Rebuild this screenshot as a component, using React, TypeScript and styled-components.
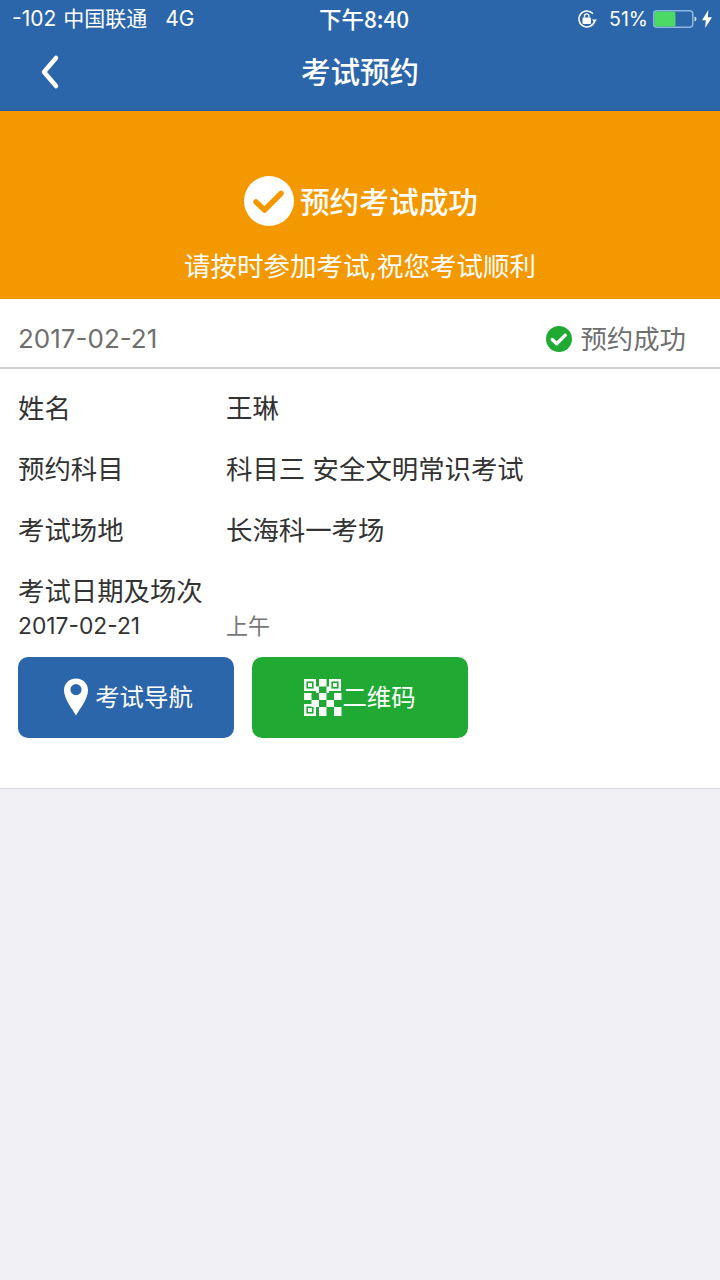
import React from "react";
import styled, { createGlobalStyle } from "styled-components";

const Global = createGlobalStyle`
  html, body {
    margin: 0;
    padding: 0;
    background: #efeff4;
    font-family: Inter, "Noto Sans CJK SC", sans-serif;
  }
`;

const S = {
  Page: styled.div`
    width: 720px;
    height: 1280px;
    overflow: hidden;
    background: #efeff4;
  `,
  Header: styled.header`
    height: 111px;
    background: #2b65aa;
    color: #fff;
    box-sizing: border-box;
    border-bottom: 1px solid #2a5f9f;
  `,
  StatusBar: styled.div`
    height: 38px;
    padding: 0 8px 0 12px;
    display: flex;
    align-items: center;
    justify-content: space-between;
    font-size: 19.5px;
    line-height: 38px;
    position: relative;
  `,
  StatusSide: styled.div`
    display: flex;
    align-items: center;
  `,
  StatusItem: styled.span<{ $gap?: number; $size?: number }>`
    margin-left: ${({ $gap }) => $gap ?? 0}px;
    white-space: nowrap;
    font-size: ${({ $size }) => ($size ? `${$size}px` : "inherit")};
  `,
  Clock: styled.span`
    position: absolute;
    left: 319px;
    top: 5px;
    font-size: 22.5px;
    line-height: 27px;
    font-weight: 500;
    font-family: "Noto Sans CJK SC", sans-serif;
  `,
  NavBar: styled.div`
    height: 68px;
    box-sizing: border-box;
    padding-bottom: 4px;
    display: flex;
    align-items: center;
    position: relative;
    justify-content: center;
  `,
  Back: styled.svg`
    position: absolute;
    left: 38px;
    top: 16px;
  `,
  Title: styled.h1`
    margin: 0;
    font-size: 29.5px;
    line-height: 40px;
    font-weight: 500;
    font-family: "Noto Sans CJK SC", sans-serif;
  `,
  Banner: styled.section`
    height: 188px;
    background: #f49800;
    color: #fff;
    box-sizing: border-box;
    padding-top: 65px;
    display: flex;
    flex-direction: column;
    align-items: center;
  `,
  BannerHead: styled.div`
    display: flex;
    align-items: center;
    gap: 6px;
    padding-left: 2px;
    font-size: 29.7px;
    line-height: 50px;
    font-weight: 500;
    font-family: "Noto Sans CJK SC", sans-serif;
  `,
  BannerNote: styled.div`
    margin-top: 22px;
    font-size: 26.5px;
    line-height: 36px;
  `,
  Card: styled.section`
    height: 490px;
    box-sizing: border-box;
    background: #fff;
    border-bottom: 1px solid #d9d9d9;
  `,
  CardHead: styled.div`
    height: 70px;
    box-sizing: border-box;
    padding: 12px 34px 0 18px;
    display: flex;
    align-items: center;
    justify-content: space-between;
    border-bottom: 2px solid #cfcfcf;
    color: #6f6f6f;
    font-size: 26.4px;
    line-height: 36px;
  `,
  HeadDate: styled.span`
    font-size: 26px;
  `,
  StateTag: styled.div`
    display: flex;
    align-items: center;
    gap: 8px;
  `,
  Rows: styled.div`
    padding: 8px 18px 0;
  `,
  Row: styled.div`
    height: 61px;
    display: grid;
    grid-template-columns: 208px 1fr;
    align-items: center;
    color: #333;
    font-size: 26.4px;
    line-height: 36px;
  `,
  WideLabel: styled.div`
    height: 61px;
    line-height: 63px;
    color: #333;
    font-size: 26.4px;
  `,
  SessionRow: styled.div`
    display: grid;
    grid-template-columns: 208px 1fr;
    align-items: center;
    height: 30px;
    margin-top: -10px;
    line-height: 30px;
  `,
  SessionDate: styled.span`
    color: #333;
    font-size: 22.8px;
  `,
  SessionTime: styled.span`
    color: #777;
    font-size: 22px;
  `,
  Actions: styled.div`
    display: flex;
    gap: 18px;
    padding: 16px 18px 0;
  `,
  Action: styled.button<{ $bg: string }>`
    width: 216px;
    height: 81px;
    border: 0;
    border-radius: 10px;
    padding: 0 0 2px;
    background: ${({ $bg }) => $bg};
    color: #fff;
    font: inherit;
    font-size: 24.4px;
    line-height: 34px;
    display: flex;
    align-items: center;
    justify-content: center;
  `,
  PinWrap: styled.span`
    display: flex;
    margin-right: 6px;
    margin-left: 4px;
  `,
};

const ROWS = [
  { label: "姓名", value: "王琳" },
  { label: "预约科目", value: "科目三 安全文明常识考试" },
  { label: "考试场地", value: "长海科一考场" },
];

// white blocks of the qr glyph as x,y,w,h, finder squares are drawn apart
const QR_BLOCKS = [
  [15, 0, 7.5, 7.5],
  [12, 7.5, 3, 6.5],
  [22.5, 7.5, 2.5, 6.5],
  [0, 14, 7.5, 7],
  [15, 14, 7.5, 7],
  [30, 14, 7.5, 7],
  [7.5, 21, 7.5, 7],
  [22.5, 21, 7.5, 7],
  [15, 28, 7.5, 9],
  [30, 28, 7.5, 9],
];

const Finder = ({ x, y }: { x: number; y: number }) => (
  <g>
    <rect x={x + 1.2} y={y + 1.2} width={9.6} height={9.6} fill="none" stroke="#fff" strokeWidth={2.4} />
    <rect x={x + 4} y={y + 4} width={4} height={4} fill="#fff" />
  </g>
);

const QrIcon = () => (
  <svg width={38} height={38} viewBox="0 -1 38 38">
    <Finder x={0} y={0} />
    <Finder x={25} y={0} />
    <Finder x={0} y={25} />
    {QR_BLOCKS.map(([x, y, w, h]) => (
      <rect key={`${x}-${y}`} x={x} y={y} width={w} height={h} fill="#fff" />
    ))}
  </svg>
);

const PinIcon = () => (
  <svg width={26} height={38} viewBox="0 0 26 38">
    <path
      fillRule="evenodd"
      fill="#fff"
      d="M13 0.500C5.800 0.500 1 5.900 1 12.400 1 20.500 9 30.500 13 37.500c4-7 12-17 12-25.100C25 5.900 20.200 0.500 13 0.500zm0 5.500a5.600 5.600 0 1 1 0 11.200 5.600 5.600 0 0 1 0-11.200z"
    />
  </svg>
);

const CheckBadge = ({ size, bg, fg, stroke }: { size: number; bg: string; fg: string; stroke: number }) => (
  <svg width={size} height={size} viewBox="0 0 50 50">
    <circle cx={25} cy={25} r={25} fill={bg} />
    <path d="M12 26l8.500 8L37 17.500" fill="none" stroke={fg} strokeWidth={stroke} strokeLinecap="round" strokeLinejoin="round" />
  </svg>
);

const App: React.FC = () => (
  <S.Page>
    <Global />
    <S.Header>
      <S.StatusBar>
        <S.StatusSide>
          <S.StatusItem $size={21}>-102</S.StatusItem>
          <S.StatusItem $gap={7} $size={21}>中国联通</S.StatusItem>
          <S.StatusItem $gap={18} $size={21}>4G</S.StatusItem>
        </S.StatusSide>
        <S.Clock>下午8:40</S.Clock>
        <S.StatusSide>
          <svg width={20} height={20} viewBox="0 0 20 20">
            <path d="M17.800 11.500A8 8 0 1 1 16 4.700" fill="none" stroke="#fff" strokeWidth={1.500} />
            <path d="M15 10.500h5l-2.500 3z" fill="#fff" />
            <rect x={5.500} y={8.500} width={8.500} height={6.500} rx={1} fill="#fff" />
            <path d="M7.500 8.500V7a2.200 2.200 0 0 1 4.400 0v1.500" fill="none" stroke="#fff" strokeWidth={1.300} />
          </svg>
          <S.StatusItem $gap={12}>51%</S.StatusItem>
          <svg width={44} height={20} viewBox="0 0 44 20" style={{ marginLeft: 5 }}>
            <rect x={0.750} y={1.750} width={39} height={16.500} rx={3} fill="none" stroke="#8fb6e2" strokeWidth={1.500} />
            <rect x={1.500} y={2.500} width={21} height={15} rx={1.500} fill="#4cd964" />
            <path d="M41.500 7.500c1.500.4 2 1.300 2 2.500s-.5 2.100-2 2.500z" fill="#cfe0f3" />
          </svg>
          <svg width={10} height={20} viewBox="0 0 11 20" style={{ marginLeft: 5 }}>
            <path d="M7 0L0 11.500h4.200L3.500 20 11 8H6.400z" fill="#fff" />
          </svg>
        </S.StatusSide>
      </S.StatusBar>
      <S.NavBar>
        <S.Back width={24} height={36} viewBox="0 0 24 36">
          <path d="M18 4L6 18l12 14" fill="none" stroke="#fff" strokeWidth={4.500} strokeLinecap="round" strokeLinejoin="round" />
        </S.Back>
        <S.Title>考试预约</S.Title>
      </S.NavBar>
    </S.Header>

    <S.Banner>
      <S.BannerHead>
        <CheckBadge size={50} bg="#fff" fg="#f49800" stroke={5.500} />
        预约考试成功
      </S.BannerHead>
      <S.BannerNote>请按时参加考试,祝您考试顺利</S.BannerNote>
    </S.Banner>

    <S.Card>
      <S.CardHead>
        <S.HeadDate>2017-02-21</S.HeadDate>
        <S.StateTag>
          <CheckBadge size={26} bg="#21aa33" fg="#fff" stroke={6.500} />
          预约成功
        </S.StateTag>
      </S.CardHead>
      <S.Rows>
        {ROWS.map((row) => (
          <S.Row key={row.label}>
            <span>{row.label}</span>
            <span>{row.value}</span>
          </S.Row>
        ))}
        <S.WideLabel>考试日期及场次</S.WideLabel>
        <S.SessionRow>
          <S.SessionDate>2017-02-21</S.SessionDate>
          <S.SessionTime>上午</S.SessionTime>
        </S.SessionRow>
      </S.Rows>
      <S.Actions>
        <S.Action $bg="#2b65aa">
          <S.PinWrap>
            <PinIcon />
          </S.PinWrap>
          考试导航
        </S.Action>
        <S.Action $bg="#21aa33">
          <QrIcon />
          二维码
        </S.Action>
      </S.Actions>
    </S.Card>
  </S.Page>
);

export default App;
